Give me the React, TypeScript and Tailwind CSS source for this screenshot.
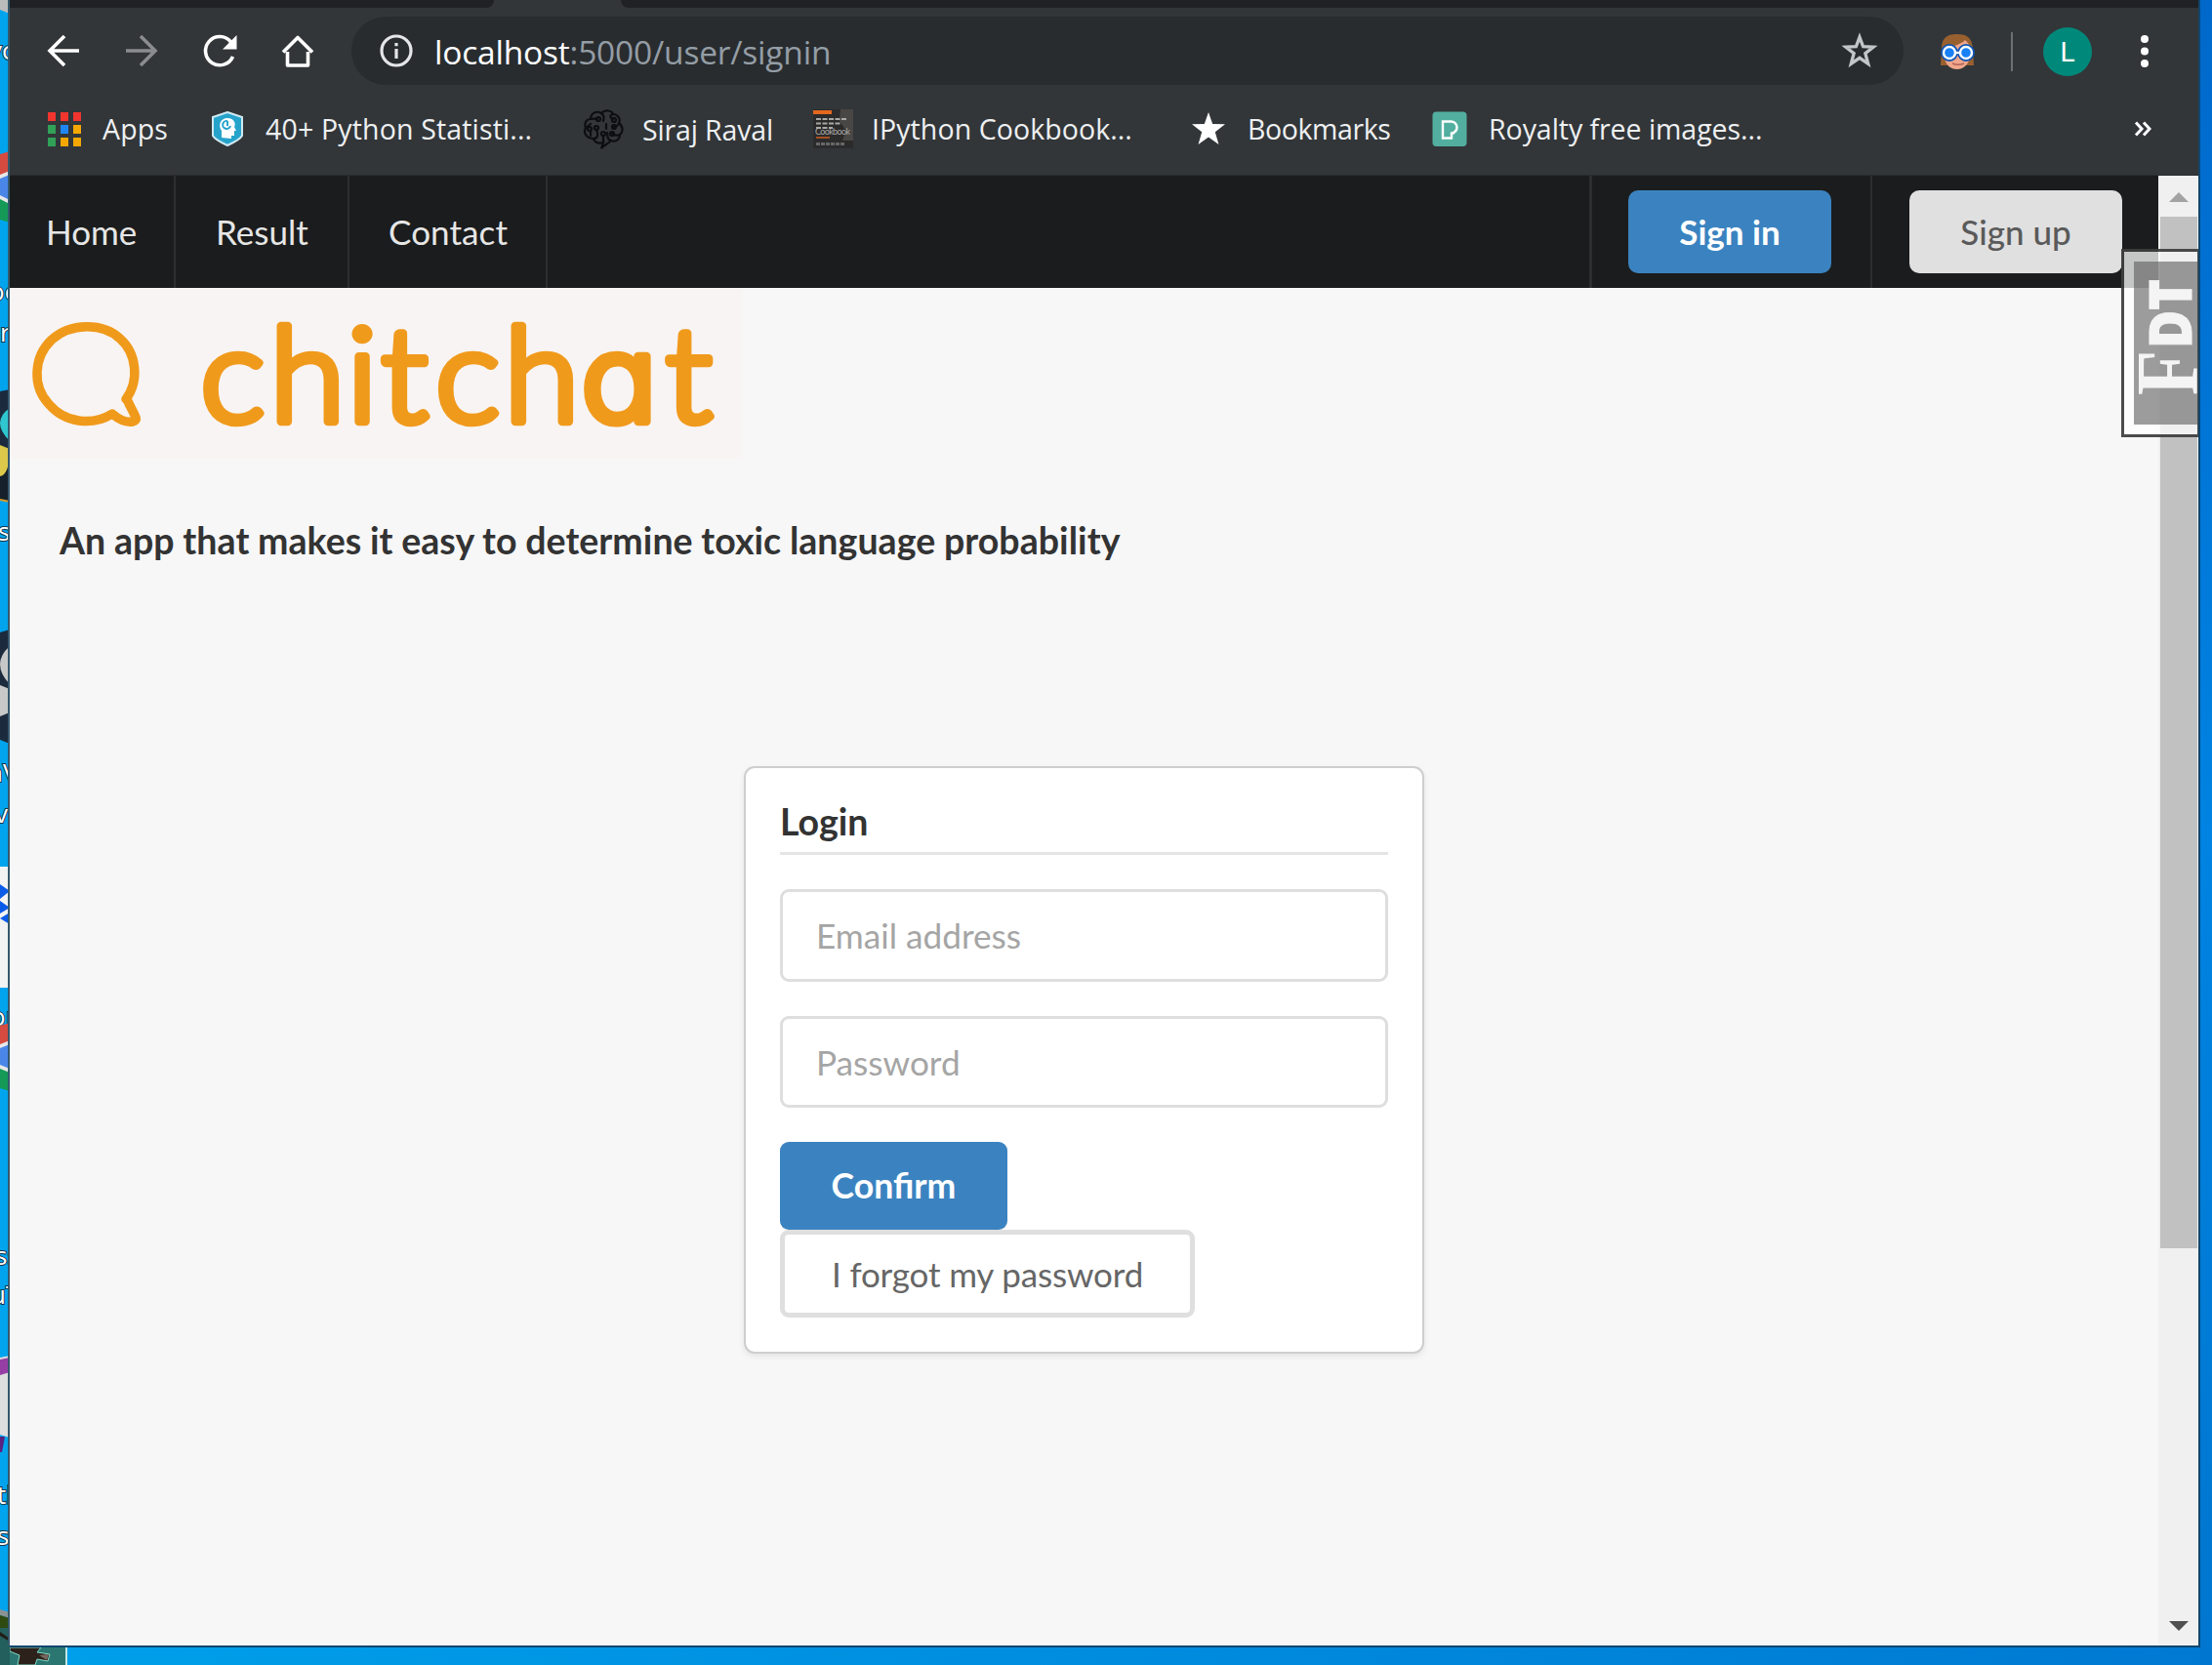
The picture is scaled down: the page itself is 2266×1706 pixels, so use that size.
import React from "react";

const ui = "font-['Open_Sans','Noto_Sans',sans-serif]";

function Mark({ w, children, text, gap, spacing }: any) {
  return (
    <div className="flex items-center shrink-0" style={{ width: w }}>
      {children}
      <span className={"whitespace-nowrap text-[28.5px] leading-[40px] text-[#eef0f1] " + ui} style={{ marginLeft: gap, letterSpacing: spacing }}>
        {text}
      </span>
    </div>
  );
}

function Toolbar() {
  return (
    <div className="flex h-[88px] shrink-0 items-start">
      <svg width="350" height="80" viewBox="10 8 350 80" className="shrink-0" fill="none" stroke="#fff" strokeWidth="3.6">
        <path d="M81 52H51M66 37L51 52L66 67" strokeLinejoin="miter" />
        <path d="M129 52H159M144 37L159 52L144 67" stroke="#8a8c8e" />
        <path d="M238.5 58A14.6 14.6 0 1 1 236.5 43" />
        <path d="M242.5 36V50.5H228Z" fill="#fff" stroke="none" />
        <path d="M294.500 53V67H315.500V53M290 53.500L305 38.500L320 53.500" strokeLinejoin="round" />
      </svg>
      <div className="mt-[9px] flex h-[70px] w-[1590px] shrink-0 items-center rounded-full bg-[#282c2f] pl-[29px] pr-[26px]">
        <svg width="34" height="34" viewBox="0 0 34 34" fill="none" stroke="#e4e6e8" strokeWidth="3.2">
          <circle cx="17" cy="17" r="15" />
          <path d="M17 15V25M17 9V12.300" />
        </svg>
        <div className={"ml-[22px] mt-px flex-1 whitespace-nowrap text-[33.5px] leading-[44px] text-[#949da5] tracking-[-0.2px] " + ui}>
          <span className="text-white">localhost</span>:5000/user/signin
        </div>
        <svg width="38" height="38" viewBox="0 0 24 24" fill="none" stroke="#c3c6c9" strokeWidth="2.1">
          <path d="M12 3.200L14.300 9.300L20.900 9.600L15.700 13.700L17.500 20.400L12 16.600L6.500 20.400L8.300 13.700L3.100 9.600L9.700 9.300Z" />
        </svg>
      </div>
      <svg width="38" height="40" viewBox="0 0 38 40" className="ml-[36px] mt-[25px] shrink-0">
        <path d="M3 16C3 6 9 2 18 2C30 2 34 6 35 17L36 34H2Z" fill="#99602f" />
        <path d="M6 17C14 15 24 12 27 8C33 13 34 20 32 26C30 34 25 38 19 38C12 38 8 34 6 27Z" fill="#f0a68a" />
        <path d="M14 32Q20 34.500 26 32" stroke="#b0645a" strokeWidth="1.5" fill="none" />
        <g fill="#1a80f5" stroke="#0c53b4" strokeWidth="2">
          <circle cx="11" cy="21" r="8" /><circle cx="28" cy="21" r="8" />
        </g>
        <g fill="none" stroke="#fff" strokeWidth="2.400">
          <circle cx="11" cy="21" r="6" /><circle cx="28" cy="21" r="6" /><path d="M17 21H22" />
        </g>
      </svg>
      <div className="ml-[36px] mt-[25px] h-[40px] w-[2px] shrink-0 bg-[#6d7072]" />
      <div className="ml-[31px] mt-[20px] flex h-[50px] w-[50px] shrink-0 items-center justify-center rounded-full bg-[#00897b] pt-px font-[Roboto] text-[28px] text-white">L</div>
      <svg width="10" height="36" viewBox="0 0 10 36" className="ml-[49px] mt-[27px] shrink-0" fill="#fff">
        <circle cx="5" cy="5" r="4" /><circle cx="5" cy="17.500" r="4" /><circle cx="5" cy="30" r="4" />
      </svg>
    </div>
  );
}

function Bookmarks() {
  const grid = ["#f0352f", "#f0352f", "#f0352f", "#30a157", "#1f87f5", "#f5a800", "#30a157", "#f5a800", "#f5a800"];
  return (
    <div className="flex h-[84px] shrink-0 items-start border-b border-[#292b2d] pl-[39px] pt-[16px]">
      <Mark w={167} gap={22} text="Apps" spacing="0.15px">
        <div className="grid w-[34px] grid-cols-[8px_8px_8px] gap-x-[5px] gap-y-[4px]">
          {grid.map((c, i) => <div key={i} className="h-[9px]" style={{ background: c }} />)}
        </div>
      </Mark>
      <Mark w={381} gap={22} text="40+ Python Statisti..." spacing="0.16px">
        <svg width="34" height="36" viewBox="0 0 34 36">
          <path d="M17 1L32 6V25Q30 29 17 35Q4 29 2 25V6Z" fill="#25a3cb" stroke="#cfe9f2" strokeWidth="2" />
          <path d="M11 27V20C7 14 10 7 17 7C24 7 26 13 24 16L26 20H24V25H21V28Z" fill="#fff" />
          <path d="M17 10A4 4 0 1 0 20 15M17 10V15" fill="none" stroke="#25a3cb" strokeWidth="2" />
        </svg>
      </Mark>
      <Mark w={236} gap={19} text="Siraj Raval" spacing="-0.15px">
        <svg width="42" height="42" viewBox="0 0 42 42" fill="none" stroke="#0d0e0f" strokeWidth="2.200" strokeLinecap="round">
          <path d="M19 40L21 34C14 36 11 32 11 30C4 30 0 24 3 19C1 14 4 10 8 10C8 4 14 1 19 4C23 0 30 1 31 5C36 5 39 10 37 14C41 17 42 23 38 26C38 31 33 34 29 32C27 35 22 36 19 40Z" />
          <path d="M8 10C12 9 14 10 15 10M19 4C22 6 22 9 21 12M31 5C27 6 28 9 31 10M37 14C36 17 34 18 32 18M38 26C34 27 31 27 30 24M29 32C24 31 26 27 25 24M11 30C16 30 16 25 14 21M21 34V28M24 20V15M8 27V22M3 19L8 15" />
          <g><circle cx="16" cy="10" r="2" /><circle cx="32" cy="11" r="2" /><circle cx="32" cy="18" r="2" /><circle cx="7" cy="20" r="2" /><circle cx="14" cy="19" r="2" /><circle cx="21" cy="25" r="2" /><circle cx="30" cy="25" r="2" /></g>
        </svg>
      </Mark>
      <Mark w={387} gap={19} text="IPython Cookbook..." spacing="0.08px">
        <svg width="41" height="40" viewBox="0 0 41 40">
          <rect width="41" height="40" fill="#2c2b2b" />
          <path d="M28 0H41V32H30L34 22L27 12Z" fill="#494745" />
          <rect y="1" width="19" height="4" fill="#e2681f" />
          <path d="M3 10H35M3 14.500H29M3 19H20" stroke="#a9a9a8" strokeWidth="1.800" strokeDasharray="5 1.500" />
          <text x="2" y="26" fontSize="9" fill="#a8a8a6" fontFamily="Lato" textLength="36">Cookbook</text>
          <path d="M3 29H17" stroke="#a44f20" strokeWidth="2" />
          <path d="M3 35.500H33" stroke="#666" strokeWidth="3" strokeDasharray="4 1" />
        </svg>
      </Mark>
      <Mark w={247} gap={22} text="Bookmarks" spacing="-0.4px">
        <svg width="36" height="34" viewBox="0 0 36 34"><path d="M18 0L22.200 12L35 12.300L24.800 20.200L28.500 33L18 25.500L7.500 33L11.200 20.200L1 12.300L13.800 12Z" fill="#fff" /></svg>
      </Mark>
      <Mark w={719} gap={22} text="Royalty free images..." spacing="-0.05px">
        <svg width="36" height="36" viewBox="0 0 36 36">
          <rect x="0.500" y="0.500" width="35" height="35.500" rx="4" fill="#52af9f" />
          <path d="M11 10.500H19A6 6 0 0 1 20 22.500V27.500H11Z" fill="none" stroke="#fff" strokeWidth="2.400" />
          <path d="M20 22.500H23" stroke="#fff" strokeWidth="2" />
        </svg>
      </Mark>
      <svg width="18" height="16" viewBox="0 0 18 16" className="mt-[12px] shrink-0" fill="none" stroke="#fff" strokeWidth="3">
        <path d="M2 1.500L8 8L2 14.500M10 1.500L16 8L10 14.500" />
      </svg>
    </div>
  );
}

function Nav() {
  return (
    <div className="flex h-[115px] shrink-0 bg-[#1b1c1d] text-[35px] leading-[50px] text-[#e6e6e6]">
      <div className="flex w-[170px] items-center border-r-2 border-[#2d2e2f] pb-[2px] pl-[37px]">Home</div>
      <div className="flex w-[178px] items-center border-r-2 border-[#2d2e2f] pb-[2px] pl-[41px]">Result</div>
      <div className="flex w-[203px] items-center border-r-2 border-[#2d2e2f] pb-[2px] pl-[40px] tracking-[0.1px]">Contact</div>
      <div className="flex-1 border-r-[3px] border-[#2d2e2f]" />
      <div className="flex w-[287px] items-center border-r-2 border-[#2d2e2f] pl-[37px]">
        <div className="flex h-[85px] w-[208px] items-center justify-center rounded-[10px] bg-[#3b83c0] pb-[2px] font-bold text-white">Sign in</div>
      </div>
      <div className="flex w-[293px] items-center pl-[38px]">
        <div className="flex h-[85px] w-[218px] items-center justify-center rounded-[10px] bg-[#e0e0e0] pb-[2px] font-medium text-[#5a5a5a]">Sign up</div>
      </div>
    </div>
  );
}

function Login() {
  return (
    <div className="ml-[752px] mt-[206px] h-[602px] w-[697px] rounded-[11px] border-[2.500px] border-[#cecece] bg-white px-[35px] pt-[35px] shadow-[0_3px_6px_rgba(0,0,0,0.08)]">
      <div className="h-[54px] border-b-[3px] border-[#e5e5e5] text-[37.500px] font-bold leading-[39px] text-[#333]">Login</div>
      <div className="mt-[35px] flex h-[95px] items-center rounded-[9px] border-[3px] border-[#dedede] pl-[34px] text-[35.200px] text-[#a5a5a5]">Email address</div>
      <div className="mt-[35px] flex h-[94px] items-center rounded-[9px] border-[3px] border-[#dedede] pl-[34px] text-[35.200px] text-[#a5a5a5]">Password</div>
      <div className="mt-[35px] flex h-[90px] w-[233px] items-center justify-center rounded-[9px] bg-[#3b83c0] text-[35.600px] font-bold text-white">Confirm</div>
      <div className="flex h-[90px] w-[425px] items-center justify-center rounded-[9px] border-[5px] border-[#dfdfdf] text-[35px] tracking-[-0.150px] text-[#666]">I forgot my password</div>
    </div>
  );
}

function Page() {
  return (
    <div className="flex w-[2201px] flex-col bg-[#f7f7f7] font-[Lato,sans-serif]">
      <Nav />
      <div className="h-[175px] w-[750px] shrink-0 bg-[#f8f4f3]">
        <svg width="750" height="175" viewBox="10 295 750 175">
          <path d="M129 409C143 390 140 362 123 347C105 330 72 331 53 348C34 366 33 396 50 414C66 433 94 437 115 424C122 430 130 433 136 432C143 430 138 427 130 409Z" fill="none" stroke="#f09a1c" strokeWidth="9.500" strokeLinejoin="round" />
          <text transform="scale(1.1 1.05)" y="411.500" textAnchor="middle" fontFamily="Lato" fontSize="127" fontWeight="300" fill="#f09a1c" stroke="#f09a1c" strokeWidth="8" strokeLinejoin="round">
            <tspan x="216.500 286.400 337.300 376.800 435.500 504.500">chitch</tspan>
            <tspan x="576.500" fontFamily="Inter" fontSize="117" style={{ fontFeatureSettings: '"cv11"' }}>a</tspan>
            <tspan x="641.500">t</tspan>
          </text>
        </svg>
      </div>
      <div className="ml-[51px] mt-[59px] whitespace-nowrap text-[37.500px] font-bold leading-[50px] text-[#333] [word-spacing:-0.500px] tracking-[0.050px]">
        An app that makes it easy to determine toxic language probability
      </div>
      <Login />
    </div>
  );
}

function DesktopEdge() {
  return (
    <svg width="10" height="1706" viewBox="0 0 10 1706" className="shrink-0 bg-[#00a4ee]">
      <path d="M0 0H10V14L0 10Z" fill="#bbb" />
      <g fontFamily="Open Sans" fontSize="26" fill="#fff" stroke="#16354a" strokeWidth="2" paintOrder="stroke">
        <text x="-11" y="61">yc</text><text x="-11" y="308">oo</text><text x="0" y="350">r</text><text x="-2" y="554">s</text>
        <text x="-13" y="801">nV</text><text x="-5" y="843">v</text><text x="-10" y="1051">op</text>
        <text x="-5" y="1296">ss</text><text x="-10" y="1336">uT</text><text x="-3" y="1541">tl</text><text x="-3" y="1583">s</text>
      </g>
      <g transform="translate(0 155)">
        <path d="M0 3L10 0V24L0 30Z" fill="#d64b40" />
        <path d="M0 46L10 50V73L0 70Z" fill="#159957" />
        <path d="M0 24L10 20V54L0 49Z" fill="#e8e8e8" />
        <path d="M0 28L10 24V50L0 45Z" fill="#4a86e8" />
      </g>
      <g transform="translate(0 1048)">
        <path d="M0 3L10 0V19L0 25Z" fill="#d64b40" transform="scale(1 1)" />
        <path d="M0 45L10 49V70L0 67Z" fill="#159957" />
        <path d="M0 22L10 18V51L0 47Z" fill="#e8e8e8" />
        <path d="M0 26L10 22V47L0 43Z" fill="#4a86e8" />
      </g>
      <path d="M0 401L10 399V476L0 474Z" fill="#1b2b3d" />
      <path d="M0 474H10V514L0 512Z" fill="#15202a" />
      <path d="M10 418Q-10 432 10 452Z" fill="#2fc6cf" /><path d="M0 456L10 460Q10 486 0 488Z" fill="#dcc94a" /><path d="M0 512L10 514" stroke="#d99a2b" strokeWidth="2" />
      <path d="M0 648L10 645V762L0 758Z" fill="#1b2b3d" /><path d="M10 662Q-10 680 10 701Z" fill="#c8c8c8" /><path d="M0 702L10 706V730L0 734Z" fill="#c8c8c8" />
      <path d="M0 888H10V964H0Z" fill="#f3f3f3" />
      <path d="M0 906L10 913L0 921ZM0 923L10 930L0 936ZM10 935L0 941L10 947Z" fill="#0a5be8" />
      <path d="M0 964H10V1012H0Z" fill="#f3f3f3" />
      <path d="M0 1391L10 1389V1473L0 1470Z" fill="#dedede" />
      <path d="M0 1393L10 1391V1406L0 1409Z" fill="#963ea4" /><path d="M0 1472H5L2 1488H0Z" fill="#59237f" />
      <path d="M0 1649L10 1652V1658L0 1655Z" fill="#8b9294" />
      <path d="M0 1655L10 1658V1668H0Z" fill="#2f4a10" />
      <path d="M0 1668H10V1706H0Z" fill="#235f5c" />
      <path d="M0 1672L10 1679V1682L0 1676Z" fill="#221b18" />
      <path d="M9 0V1686" stroke="#35586c" strokeWidth="2" />
    </svg>
  );
}

export default function App() {
  return (
    <div className="relative flex h-[1706px] w-[2266px] overflow-hidden bg-[#0079d3]">
      <DesktopEdge />
      <div className="flex w-[2242px] shrink-0 flex-col">
        <div className="flex h-[1686px] shrink-0 flex-col bg-[#323639]">
          <div className="flex h-[8px] shrink-0 justify-between">
            <div className="w-[496px] rounded-br-[12px] bg-[#202124]" />
            <div className="w-[1616px] rounded-bl-[12px] bg-[#202124]" />
          </div>
          <Toolbar />
          <Bookmarks />
          <div className="flex min-h-0 flex-1">
            <Page />
            <div className="flex w-[41px] flex-col items-center justify-between bg-[#f0f0f0]">
              <div className="flex w-full flex-col items-center">
                <svg width="20" height="10" viewBox="0 0 20 10" className="mt-[17px]"><path d="M10 0L20 10H0Z" fill="#a3a3a3" /></svg>
                <div className="mt-[15px] h-[1057px] w-[38px] bg-[#c1c1c1]" />
              </div>
              <svg width="20" height="10" viewBox="0 0 20 10" className="mb-[15px]"><path d="M10 10L20 0H0Z" fill="#505050" /></svg>
            </div>
          </div>
        </div>
        <div className="h-[2px] shrink-0 bg-[#10466e]" />
        <div className="flex h-[18px] shrink-0 bg-gradient-to-r from-[#00a0ea] to-[#0079d3]">
          <svg width="60" height="18" viewBox="10 0 60 18">
            <rect x="10" width="57" height="18" fill="#2c7672" />
            <path d="M10 0H42L38 5L51 7L49 14L38 12L36 18H18L20 8L10 4Z" fill="#2d211b" stroke="#7fd8c4" strokeWidth="1" />
            <path d="M40 8L50 7L48 13Z" fill="#77685f" />
            <path d="M68 0V18" stroke="#bfe6e4" strokeWidth="2" />
          </svg>
        </div>
      </div>
      <div className="h-[1688px] w-[2px] shrink-0 bg-[#10466e]" />
      <div className="w-[12px] shrink-0 bg-gradient-to-b from-[#0068cb] via-[#0083e2] to-[#0076cf]" />
      <div className="absolute left-[2173px] top-[255px] h-[193px] w-[79px] border-[3px] border-r-[1px] border-black/70 bg-white/75 pl-[10px] pt-[10px]">
        <svg width="65" height="167" viewBox="2186 268 65 167" className="bg-[#5c5c5c]/60" fill="#f4f4f4">
          <g transform="rotate(-90)">
            <text x="-405" y="2251" fontFamily="Liberation Serif" fontWeight="700" fontSize="90" textLength="46" lengthAdjust="spacingAndGlyphs">F</text>
            <text x="-357" y="2245" fontFamily="Open Sans" fontWeight="800" fontSize="60" stroke="#f4f4f4" strokeWidth="1" textLength="71" lengthAdjust="spacingAndGlyphs">DT</text>
          </g>
        </svg>
      </div>
    </div>
  );
}
